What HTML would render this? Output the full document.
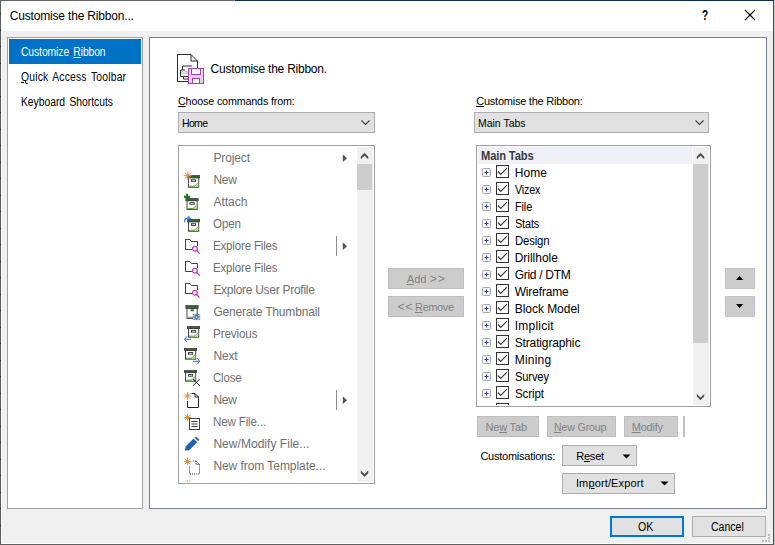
<!DOCTYPE html>
<html><head><meta charset="utf-8"><title>Customise the Ribbon...</title>
<style>
html,body{margin:0;padding:0;}
body{width:775px;height:545px;overflow:hidden;background:#f0f0f0;position:relative;font-family:"Liberation Sans", sans-serif;}
.b{position:absolute;display:block;}
.t{position:absolute;white-space:nowrap;line-height:16px;height:16px;font-family:"Liberation Sans", sans-serif;}
u{text-decoration:underline;text-underline-offset:1px;}
</style></head><body>
<div class="b" style="left:1px;top:1px;width:772px;height:30px;background:#fff;"></div>
<div class="b" style="left:0px;top:0px;width:235px;height:1px;background:#666;"></div>
<div class="b" style="left:234px;top:0px;width:1px;height:1px;background:#8a8a8a;"></div>
<div class="b" style="left:235px;top:0px;width:540px;height:1px;background:#0a2d50;"></div>
<div class="b" style="left:0px;top:1px;width:1px;height:544px;background:#5c5c5c;"></div>
<div class="b" style="left:1px;top:31px;width:1px;height:512px;background:#fff;"></div>
<div class="b" style="left:773px;top:1px;width:1px;height:544px;background:#4a4a4a;"></div>
<div class="b" style="left:774px;top:0px;width:1px;height:545px;background:#c4c4c4;"></div>
<div class="b" style="left:1px;top:543px;width:772px;height:1px;background:#fff;"></div>
<div class="b" style="left:0px;top:544px;width:774px;height:1px;background:#606060;"></div>
<div class="b" style="left:0px;top:13px;width:1px;height:1px;background:#2a2a2a;"></div>
<div class="b" style="left:0px;top:30px;width:1px;height:1px;background:#2a2a2a;"></div>
<div class="b" style="left:0px;top:46px;width:1px;height:1px;background:#2a2a2a;"></div>
<div class="b" style="left:0px;top:63px;width:1px;height:1px;background:#2a2a2a;"></div>
<div class="b" style="left:0px;top:79px;width:1px;height:1px;background:#2a2a2a;"></div>
<div class="b" style="left:0px;top:96px;width:1px;height:1px;background:#2a2a2a;"></div>
<div class="b" style="left:0px;top:112px;width:1px;height:1px;background:#2a2a2a;"></div>
<div class="b" style="left:0px;top:129px;width:1px;height:1px;background:#2a2a2a;"></div>
<div class="b" style="left:0px;top:145px;width:1px;height:1px;background:#2a2a2a;"></div>
<div class="b" style="left:0px;top:162px;width:1px;height:1px;background:#2a2a2a;"></div>
<div class="b" style="left:0px;top:178px;width:1px;height:1px;background:#2a2a2a;"></div>
<div class="b" style="left:0px;top:195px;width:1px;height:1px;background:#2a2a2a;"></div>
<div class="b" style="left:0px;top:211px;width:1px;height:1px;background:#2a2a2a;"></div>
<div class="b" style="left:0px;top:228px;width:1px;height:1px;background:#2a2a2a;"></div>
<div class="b" style="left:0px;top:244px;width:1px;height:1px;background:#2a2a2a;"></div>
<div class="b" style="left:0px;top:261px;width:1px;height:1px;background:#2a2a2a;"></div>
<div class="b" style="left:0px;top:277px;width:1px;height:1px;background:#2a2a2a;"></div>
<div class="b" style="left:0px;top:294px;width:1px;height:1px;background:#2a2a2a;"></div>
<div class="b" style="left:0px;top:310px;width:1px;height:1px;background:#2a2a2a;"></div>
<div class="b" style="left:0px;top:327px;width:1px;height:1px;background:#2a2a2a;"></div>
<div class="b" style="left:0px;top:343px;width:1px;height:1px;background:#2a2a2a;"></div>
<div class="b" style="left:0px;top:360px;width:1px;height:1px;background:#2a2a2a;"></div>
<div class="b" style="left:0px;top:376px;width:1px;height:1px;background:#2a2a2a;"></div>
<div class="b" style="left:0px;top:393px;width:1px;height:1px;background:#2a2a2a;"></div>
<div class="b" style="left:0px;top:409px;width:1px;height:1px;background:#2a2a2a;"></div>
<div class="b" style="left:0px;top:426px;width:1px;height:1px;background:#2a2a2a;"></div>
<div class="b" style="left:0px;top:442px;width:1px;height:1px;background:#2a2a2a;"></div>
<div class="b" style="left:0px;top:459px;width:1px;height:1px;background:#2a2a2a;"></div>
<div class="b" style="left:0px;top:475px;width:1px;height:1px;background:#2a2a2a;"></div>
<div class="b" style="left:0px;top:492px;width:1px;height:1px;background:#2a2a2a;"></div>
<div class="b" style="left:0px;top:508px;width:1px;height:1px;background:#2a2a2a;"></div>
<div class="b" style="left:0px;top:525px;width:1px;height:1px;background:#2a2a2a;"></div>
<div class="t " style="left:9.80px;top:8px;font-size:12px;color:#000;letter-spacing:-0.180px;">Customise the Ribbon...</div>
<div class="t " style="left:702.30px;top:7px;font-size:14px;color:#000;font-weight:bold;transform:scaleX(0.72);transform-origin:0 0;">?</div>
<svg class="b" style="left:744px;top:9px" width="14" height="14" viewBox="0 0 14 14"><path d="M1 1 L11 11 M11 1 L1 11" stroke="#000" stroke-width="1.1" fill="none"/></svg>
<div class="b" style="left:7px;top:37px;width:136px;height:472px;background:#fff;border:1px solid #a0a0a0;box-sizing:border-box;"></div>
<div class="b" style="left:9px;top:39px;width:132px;height:25px;background:#0072c6;"></div>
<div class="t " style="left:20.80px;top:44px;font-size:12px;color:#fff;letter-spacing:-0.091px;word-spacing:1.7px;transform:scaleX(0.86);transform-origin:0 0;">Customize <u>R</u>ibbon</div>
<div class="t " style="left:20.60px;top:69px;font-size:12px;color:#000;letter-spacing:0.220px;word-spacing:1.7px;transform:scaleX(0.86);transform-origin:0 0;"><u>Q</u>uick Access Toolbar</div>
<div class="t " style="left:21.30px;top:94px;font-size:12px;color:#000;letter-spacing:-0.014px;word-spacing:1.7px;transform:scaleX(0.86);transform-origin:0 0;">Keyboard Shortcuts</div>
<div class="b" style="left:149px;top:37px;width:618px;height:472px;background:#fff;border:1px solid #7a8290;box-sizing:border-box;"></div>
<svg class="b" style="left:176px;top:52px" width="30" height="34" viewBox="0 0 30 34">
<path d="M1.5 2.5 H15 L21.5 9 V17 M13 29.5 H1.5 V2.5 M15 2.5 V9 H21.5" stroke="#2b2b2b" stroke-width="1" fill="none"/>
<path d="M16 14 H6.5 V18 M4.5 18 H9 M4.5 18 V24.5 H7.5 V27 H12" stroke="#2b2b2b" stroke-width="1" fill="none"/>
<rect x="5" y="19" width="7" height="3" fill="#d9d9d9"/>
<path d="M7.5 24.5 H12" stroke="#2b2b2b" stroke-width="1"/>
<rect x="12.5" y="16.5" width="15" height="15" fill="#e6cfe8" stroke="#a63fb0" stroke-width="1"/>
<rect x="15.5" y="16.5" width="9" height="6" fill="#fff" stroke="#a63fb0" stroke-width="1"/>
<rect x="16.5" y="26.5" width="7" height="5" fill="#fff" stroke="#a63fb0" stroke-width="1"/>
</svg>
<div class="t " style="left:210.60px;top:61px;font-size:12px;color:#000;letter-spacing:-0.250px;">Customise the Ribbon.</div>
<div class="t " style="left:178.20px;top:93px;font-size:11px;color:#000;letter-spacing:-0.150px;transform:scaleX(0.974);transform-origin:0 0;"><u>C</u>hoose commands from:</div>
<div class="t " style="left:476.20px;top:93px;font-size:11px;color:#000;letter-spacing:-0.234px;"><u>C</u>ustomise the Ribbon:</div>
<div class="b" style="left:178px;top:112px;width:197px;height:21px;background:#e1e1e1;border:1px solid #adadad;box-sizing:border-box;"></div>
<div class="t " style="left:181.90px;top:115px;font-size:11px;color:#000;letter-spacing:-0.660px;transform:scaleX(0.95);transform-origin:0 0;">Home</div>
<svg class="b" style="left:360px;top:119px" width="12" height="8" viewBox="0 0 12 8"><path d="M1.5 1.5 L5.5 5.5 L9.5 1.5" stroke="#404040" stroke-width="1.1" fill="none"/></svg>
<div class="b" style="left:474px;top:112px;width:235px;height:21px;background:#e1e1e1;border:1px solid #adadad;box-sizing:border-box;"></div>
<div class="t " style="left:477.50px;top:115px;font-size:11px;color:#000;letter-spacing:0.008px;transform:scaleX(0.95);transform-origin:0 0;">Main Tabs</div>
<svg class="b" style="left:694px;top:119px" width="12" height="8" viewBox="0 0 12 8"><path d="M1.5 1.5 L5.5 5.5 L9.5 1.5" stroke="#404040" stroke-width="1.1" fill="none"/></svg>
<div class="b" style="left:178px;top:145px;width:197px;height:339px;background:#fff;border:1px solid #a0a0a0;box-sizing:border-box;"></div>
<div class="b" style="left:357px;top:147px;width:16px;height:335px;background:#f0f0f0;"></div>
<div class="b" style="left:357px;top:164px;width:15px;height:26px;background:#cdcdcd;"></div>
<svg class="b" style="left:359px;top:151px" width="11" height="10" viewBox="0 0 11 10"><path transform="translate(0.50 0.80)" d="M5 1 L8.7 4.8 V7.4 L5 3.9 L1.3 7.4 V4.8 Z" fill="#505050"/></svg>
<svg class="b" style="left:359px;top:469px" width="11" height="10" viewBox="0 0 11 10"><path transform="translate(0.50 0.90)" d="M5 7.1 L8.7 3.3 V0.7 L5 4.2 L1.3 0.7 V3.3 Z" fill="#505050"/></svg>
<div class="t " style="left:213.40px;top:150px;font-size:12px;color:#707070;letter-spacing:-0.124px;">Project</div>
<svg class="b" style="left:342px;top:154px" width="6" height="9" viewBox="0 0 6 9"><path d="M0.8 0.5 L5 4.2 L0.8 8 Z" fill="#505050"/></svg>
<div class="t " style="left:213.40px;top:172px;font-size:12px;color:#707070;letter-spacing:-0.268px;">New</div>
<svg class="b" style="left:184px;top:172px;overflow:visible" width="17" height="17" viewBox="0 0 17 17"><rect x="4.5" y="5.7" width="10.2" height="9.60" fill="#fff" stroke="#484848" stroke-width="1"/><path d="M14.2 10.20 V14.80 H9.2 Z" fill="#74b356"/><path d="M11 14.80 L14.2 11.80 M12.8 14.80 L14.2 13.50" stroke="#fff" stroke-width="0.8"/><rect x="5" y="13.70" width="5.6" height="1.1" fill="#62a83e"/><rect x="3.35" y="3.35" width="12.3" height="2.50" fill="#2f6b2f" stroke="#3a3a3a" stroke-width="0.7"/><rect x="7.5" y="7.70" width="4.1" height="1.7" fill="#fff" stroke="#444" stroke-width="1"/><path d="M-0.15 3.65 L7.85 3.65 M1.02 0.82 L6.68 6.48 M3.85 -0.35 L3.85 7.65 M6.68 0.82 L1.02 6.48 " stroke="#f28a3c" stroke-width="1" fill="none"/></svg>
<div class="t " style="left:213.40px;top:194px;font-size:12px;color:#707070;letter-spacing:-0.004px;">Attach</div>
<svg class="b" style="left:184px;top:194px;overflow:visible" width="17" height="17" viewBox="0 0 17 17"><rect x="3.0" y="6.6000000000000005" width="10.2" height="8.90" fill="#fff" stroke="#484848" stroke-width="1"/><path d="M12.7 10.40 V15.00 H7.7 Z" fill="#74b356"/><path d="M9.5 15.00 L12.7 12.00 M11.3 15.00 L12.7 13.70" stroke="#fff" stroke-width="0.8"/><rect x="3.5" y="13.90" width="5.6" height="1.1" fill="#62a83e"/><rect x="1.85" y="4.35" width="12.3" height="2.40" fill="#2f6b2f" stroke="#3a3a3a" stroke-width="0.7"/><rect x="6.0" y="8.60" width="4.1" height="1.7" fill="#fff" stroke="#444" stroke-width="1"/><path d="M3 -0.2 V5.6 M0 2.9 H6.1" stroke="#1f7a1f" stroke-width="2.1"/></svg>
<div class="t " style="left:213.40px;top:216px;font-size:12px;color:#707070;letter-spacing:-0.150px;transform:scaleX(0.969);transform-origin:0 0;">Open</div>
<svg class="b" style="left:184px;top:216px;overflow:visible" width="17" height="17" viewBox="0 0 17 17"><rect x="4.5" y="5.7" width="10.2" height="9.60" fill="#fff" stroke="#484848" stroke-width="1"/><path d="M14.2 10.20 V14.80 H9.2 Z" fill="#74b356"/><path d="M11 14.80 L14.2 11.80 M12.8 14.80 L14.2 13.50" stroke="#fff" stroke-width="0.8"/><rect x="5" y="13.70" width="5.6" height="1.1" fill="#62a83e"/><rect x="3.35" y="3.35" width="12.3" height="2.50" fill="#2f6b2f" stroke="#3a3a3a" stroke-width="0.7"/><rect x="7.5" y="7.70" width="4.1" height="1.7" fill="#fff" stroke="#444" stroke-width="1"/><path d="M1 6.5 C-0.3 3.5 1.8 1.6 5 2.2 M4 0.2 L6.3 2.6 L3.2 4.2" stroke="#2f6fd0" stroke-width="1.1" fill="none"/></svg>
<div class="t " style="left:213.40px;top:238px;font-size:12px;color:#707070;letter-spacing:-0.150px;transform:scaleX(0.956);transform-origin:0 0;">Explore Files</div>
<svg class="b" style="left:184px;top:238px;overflow:visible" width="17" height="17" viewBox="0 0 17 17"><path d="M1.5 1.5 H6 L7.5 3.5 H13.5 V8 M1.5 1.5 V11.5 H8" stroke="#2a2a2a" stroke-width="0.9" fill="none"/><circle cx="10.9" cy="10.7" r="2.4" stroke="#b040b8" stroke-width="1.2" fill="#fff"/><path d="M12.7 12.5 L15.6 15.6" stroke="#b040b8" stroke-width="1.2"/></svg>
<svg class="b" style="left:342px;top:242px" width="6" height="9" viewBox="0 0 6 9"><path d="M0.8 0.5 L5 4.2 L0.8 8 Z" fill="#505050"/></svg>
<div class="b" style="left:336px;top:236px;width:1px;height:20px;background:#8c8c8c;"></div>
<div class="t " style="left:213.40px;top:260px;font-size:12px;color:#707070;letter-spacing:-0.150px;transform:scaleX(0.956);transform-origin:0 0;">Explore Files</div>
<svg class="b" style="left:184px;top:260px;overflow:visible" width="17" height="17" viewBox="0 0 17 17"><path d="M1.5 1.5 H6 L7.5 3.5 H13.5 V8 M1.5 1.5 V11.5 H8" stroke="#2a2a2a" stroke-width="0.9" fill="none"/><circle cx="10.9" cy="10.7" r="2.4" stroke="#b040b8" stroke-width="1.2" fill="#fff"/><path d="M12.7 12.5 L15.6 15.6" stroke="#b040b8" stroke-width="1.2"/></svg>
<div class="t " style="left:213.40px;top:282px;font-size:12px;color:#707070;letter-spacing:-0.274px;">Explore User Profile</div>
<svg class="b" style="left:184px;top:282px;overflow:visible" width="17" height="17" viewBox="0 0 17 17"><path d="M1.5 1.5 H6 L7.5 3.5 H13.5 V8 M1.5 1.5 V11.5 H8" stroke="#2a2a2a" stroke-width="0.9" fill="none"/><circle cx="10.9" cy="10.7" r="2.4" stroke="#b040b8" stroke-width="1.2" fill="#fff"/><path d="M12.7 12.5 L15.6 15.6" stroke="#b040b8" stroke-width="1.2"/></svg>
<div class="t " style="left:213.40px;top:304px;font-size:12px;color:#707070;letter-spacing:-0.157px;">Generate Thumbnail</div>
<svg class="b" style="left:184px;top:304px;overflow:visible" width="17" height="17" viewBox="0 0 17 17"><rect x="3.0" y="4.3" width="10.2" height="10.10" fill="#fff" stroke="#484848" stroke-width="1"/><path d="M12.7 9.30 V13.90 H7.7 Z" fill="#74b356"/><path d="M9.5 13.90 L12.7 10.90 M11.3 13.90 L12.7 12.60" stroke="#fff" stroke-width="0.8"/><rect x="3.5" y="12.80" width="5.6" height="1.1" fill="#62a83e"/><rect x="1.85" y="1.5499999999999998" width="12.3" height="2.90" fill="#2f6b2f" stroke="#3a3a3a" stroke-width="0.7"/><rect x="6.6" y="5.4" width="3.2" height="1.8" fill="#444"/><rect x="9.2" y="10.6" width="6.5" height="5" fill="#fff" stroke="#3a3a3a" stroke-width="0.8" stroke-dasharray="1 0.6"/><circle cx="12.5" cy="13.1" r="2.4" fill="#2f6fd0"/><path d="M11.9 12 L13.6 13.1 L11.9 14.2 Z" fill="#fff"/></svg>
<div class="t " style="left:213.40px;top:326px;font-size:12px;color:#707070;letter-spacing:-0.150px;transform:scaleX(0.975);transform-origin:0 0;">Previous</div>
<svg class="b" style="left:184px;top:326px;overflow:visible" width="17" height="17" viewBox="0 0 17 17"><rect x="4.5" y="2.5" width="10.2" height="8.70" fill="#fff" stroke="#484848" stroke-width="1"/><path d="M14.2 6.10 V10.70 H9.2 Z" fill="#74b356"/><path d="M11 10.70 L14.2 7.70 M12.8 10.70 L14.2 9.40" stroke="#fff" stroke-width="0.8"/><rect x="5" y="9.60" width="5.6" height="1.1" fill="#62a83e"/><rect x="3.35" y="0.35" width="12.3" height="2.30" fill="#2f6b2f" stroke="#3a3a3a" stroke-width="0.7"/><rect x="7.5" y="4.50" width="4.1" height="1.7" fill="#fff" stroke="#444" stroke-width="1"/><path d="M7 13.3 H0.6 M3 10.3 L0.5 13.3 L3 16.3" stroke="#2f6fd0" stroke-width="1" fill="none"/></svg>
<div class="t " style="left:213.40px;top:348px;font-size:12px;color:#707070;letter-spacing:-0.124px;">Next</div>
<svg class="b" style="left:184px;top:348px;overflow:visible" width="17" height="17" viewBox="0 0 17 17"><rect x="1.5" y="2.5" width="10.2" height="8.70" fill="#fff" stroke="#484848" stroke-width="1"/><path d="M11.2 6.10 V10.70 H6.2 Z" fill="#74b356"/><path d="M8 10.70 L11.2 7.70 M9.8 10.70 L11.2 9.40" stroke="#fff" stroke-width="0.8"/><rect x="2" y="9.60" width="5.6" height="1.1" fill="#62a83e"/><rect x="0.35" y="0.35" width="12.3" height="2.30" fill="#2f6b2f" stroke="#3a3a3a" stroke-width="0.7"/><rect x="4.5" y="4.50" width="4.1" height="1.7" fill="#fff" stroke="#444" stroke-width="1"/><path d="M9 13.3 H15.6 M13.2 10.3 L15.7 13.3 L13.2 16.3" stroke="#2f6fd0" stroke-width="1" fill="none"/></svg>
<div class="t " style="left:213.40px;top:370px;font-size:12px;color:#707070;letter-spacing:-0.150px;transform:scaleX(0.947);transform-origin:0 0;">Close</div>
<svg class="b" style="left:184px;top:370px;overflow:visible" width="17" height="17" viewBox="0 0 17 17"><rect x="1.5" y="2.5" width="10.2" height="8.70" fill="#fff" stroke="#484848" stroke-width="1"/><path d="M11.2 6.10 V10.70 H6.2 Z" fill="#74b356"/><path d="M8 10.70 L11.2 7.70 M9.8 10.70 L11.2 9.40" stroke="#fff" stroke-width="0.8"/><rect x="2" y="9.60" width="5.6" height="1.1" fill="#62a83e"/><rect x="0.35" y="0.35" width="12.3" height="2.30" fill="#2f6b2f" stroke="#3a3a3a" stroke-width="0.7"/><rect x="4.5" y="4.50" width="4.1" height="1.7" fill="#fff" stroke="#444" stroke-width="1"/><path d="M9 9 L15.8 15.8 M15.8 9 L9 15.8" stroke="#222" stroke-width="1" fill="none"/></svg>
<div class="t " style="left:213.40px;top:392px;font-size:12px;color:#707070;letter-spacing:-0.268px;">New</div>
<svg class="b" style="left:184px;top:392px;overflow:visible" width="17" height="17" viewBox="0 0 17 17"><path d="M-0.30 4.00 L7.30 4.00 M0.81 1.31 L6.19 6.69 M3.50 0.20 L3.50 7.80 M6.19 1.31 L0.81 6.69 " stroke="#f28a3c" stroke-width="1" fill="none"/><path d="M3.5 9 V15.5 H14.5 V5 L11 1.5 H7.5 M11 1.5 V5 H14.5" stroke="#222" stroke-width="1" fill="none"/></svg>
<svg class="b" style="left:342px;top:396px" width="6" height="9" viewBox="0 0 6 9"><path d="M0.8 0.5 L5 4.2 L0.8 8 Z" fill="#505050"/></svg>
<div class="b" style="left:336px;top:390px;width:1px;height:20px;background:#8c8c8c;"></div>
<div class="t " style="left:213.40px;top:414px;font-size:12px;color:#707070;letter-spacing:-0.150px;transform:scaleX(0.964);transform-origin:0 0;">New File...</div>
<svg class="b" style="left:184px;top:414px;overflow:visible" width="17" height="17" viewBox="0 0 17 17"><path d="M-0.30 3.50 L7.30 3.50 M0.81 0.81 L6.19 6.19 M3.50 -0.30 L3.50 7.30 M6.19 0.81 L0.81 6.19 " stroke="#f28a3c" stroke-width="1" fill="none"/><rect x="5.5" y="4.5" width="10" height="11" fill="#fff" stroke="#444" stroke-width="1"/><path d="M7.5 7.5 H13.5 M7.5 10 H13.5 M7.5 12.5 H13.5" stroke="#333" stroke-width="1"/></svg>
<div class="t " style="left:213.40px;top:436px;font-size:12px;color:#707070;letter-spacing:0.038px;">New/Modify File...</div>
<svg class="b" style="left:184px;top:436px;overflow:visible" width="17" height="17" viewBox="0 0 17 17"><path d="M1 14.5 L1.6 10.6 L9.6 2.6 L13.2 6.2 L5.2 14.2 Z" fill="#1e63b8"/><path d="M10.6 1.6 L12 0.4 L15.4 3.8 L14.2 5.2 Z" fill="#1e63b8"/></svg>
<div class="t " style="left:213.40px;top:458px;font-size:12px;color:#707070;letter-spacing:-0.055px;">New from Template...</div>
<svg class="b" style="left:184px;top:458px;overflow:visible" width="17" height="17" viewBox="0 0 17 17"><path d="M-0.30 3.50 L7.30 3.50 M0.81 0.81 L6.19 6.19 M3.50 -0.30 L3.50 7.30 M6.19 0.81 L0.81 6.19 " stroke="#f28a3c" stroke-width="1" fill="none"/><path d="M5.5 8.5 V16 H15.5 V6.5 L12 3 H9 M12 3 V6.5 H15.5" stroke="#333" stroke-width="1" stroke-dasharray="1 1" fill="none"/></svg>
<svg class="b" style="left:184px;top:480px" width="8" height="2" viewBox="0 0 8 2"><path d="M1.5 1 h1 M3.5 0.5 v1 M5.5 1 h1" stroke="#f28a3c" stroke-width="1"/></svg>
<div class="b" style="left:388px;top:268px;width:76px;height:21px;background:#cccccc;border:1px solid #bfbfbf;box-sizing:border-box;"></div>
<div class="t " style="left:406.80px;top:271px;font-size:11px;color:#838383;"><u>A</u>dd <span style="font-size:12px;letter-spacing:1px;margin-left:0.2px">&gt;&gt;</span></div>
<div class="b" style="left:388px;top:296px;width:76px;height:21px;background:#cccccc;border:1px solid #bfbfbf;box-sizing:border-box;"></div>
<div class="t " style="left:397.60px;top:299px;font-size:11px;color:#838383;"><span style="font-size:12px;letter-spacing:1px;margin-right:-1.2px">&lt;&lt;</span><span style="letter-spacing:-0.4px"> <u>R</u>emove</span></div>
<div class="b" style="left:476px;top:145px;width:235px;height:262px;background:#fff;border:1px solid #a0a0a0;box-sizing:border-box;"></div>
<div class="b" style="left:478px;top:147px;width:214px;height:17px;background:#f0f1f6;"></div>
<div class="t " style="left:481.30px;top:148px;font-size:12px;color:#3b3b3b;letter-spacing:-0.150px;font-weight:bold;transform:scaleX(0.93);transform-origin:0 0;">Main Tabs</div>
<div class="b" style="left:693px;top:147px;width:16px;height:258px;background:#f0f0f0;"></div>
<div class="b" style="left:693px;top:164px;width:15px;height:179px;background:#cdcdcd;"></div>
<svg class="b" style="left:695px;top:151px" width="11" height="10" viewBox="0 0 11 10"><path transform="translate(0.50 0.80)" d="M5 1 L8.7 4.8 V7.4 L5 3.9 L1.3 7.4 V4.8 Z" fill="#505050"/></svg>
<svg class="b" style="left:695px;top:393px" width="11" height="10" viewBox="0 0 11 10"><path transform="translate(0.50 0.20)" d="M5 7.1 L8.7 3.3 V0.7 L5 4.2 L1.3 0.7 V3.3 Z" fill="#505050"/></svg>
<svg class="b" style="left:482px;top:168px" width="9" height="9" viewBox="0 0 9 9"><rect x="0.5" y="0.5" width="8" height="8" rx="1" fill="#f7f7f7" stroke="#a8a8a8"/><path d="M2.5 4.5 H6.5 M4.5 2.5 V6.5" stroke="#2b3fa0" stroke-width="1"/></svg>
<svg class="b" style="left:496px;top:165px" width="13" height="13" viewBox="0 0 13 13"><rect x="0.5" y="0.5" width="12" height="12" fill="#fff" stroke="#333"/><path d="M1.9 6.5 L4.7 9.4 L10.9 3.2" stroke="#3a3a3a" stroke-width="1.2" fill="none"/></svg>
<div class="t " style="left:514.70px;top:165px;font-size:12px;color:#000;letter-spacing:0.095px;">Home</div>
<svg class="b" style="left:482px;top:185px" width="9" height="9" viewBox="0 0 9 9"><rect x="0.5" y="0.5" width="8" height="8" rx="1" fill="#f7f7f7" stroke="#a8a8a8"/><path d="M2.5 4.5 H6.5 M4.5 2.5 V6.5" stroke="#2b3fa0" stroke-width="1"/></svg>
<svg class="b" style="left:496px;top:182px" width="13" height="13" viewBox="0 0 13 13"><rect x="0.5" y="0.5" width="12" height="12" fill="#fff" stroke="#333"/><path d="M1.9 6.5 L4.7 9.4 L10.9 3.2" stroke="#3a3a3a" stroke-width="1.2" fill="none"/></svg>
<div class="t " style="left:514.70px;top:182px;font-size:12px;color:#000;letter-spacing:-0.150px;transform:scaleX(0.89);transform-origin:0 0;">Vizex</div>
<svg class="b" style="left:482px;top:202px" width="9" height="9" viewBox="0 0 9 9"><rect x="0.5" y="0.5" width="8" height="8" rx="1" fill="#f7f7f7" stroke="#a8a8a8"/><path d="M2.5 4.5 H6.5 M4.5 2.5 V6.5" stroke="#2b3fa0" stroke-width="1"/></svg>
<svg class="b" style="left:496px;top:199px" width="13" height="13" viewBox="0 0 13 13"><rect x="0.5" y="0.5" width="12" height="12" fill="#fff" stroke="#333"/><path d="M1.9 6.5 L4.7 9.4 L10.9 3.2" stroke="#3a3a3a" stroke-width="1.2" fill="none"/></svg>
<div class="t " style="left:514.70px;top:199px;font-size:12px;color:#000;letter-spacing:-0.150px;transform:scaleX(0.911);transform-origin:0 0;">File</div>
<svg class="b" style="left:482px;top:219px" width="9" height="9" viewBox="0 0 9 9"><rect x="0.5" y="0.5" width="8" height="8" rx="1" fill="#f7f7f7" stroke="#a8a8a8"/><path d="M2.5 4.5 H6.5 M4.5 2.5 V6.5" stroke="#2b3fa0" stroke-width="1"/></svg>
<svg class="b" style="left:496px;top:216px" width="13" height="13" viewBox="0 0 13 13"><rect x="0.5" y="0.5" width="12" height="12" fill="#fff" stroke="#333"/><path d="M1.9 6.5 L4.7 9.4 L10.9 3.2" stroke="#3a3a3a" stroke-width="1.2" fill="none"/></svg>
<div class="t " style="left:514.70px;top:216px;font-size:12px;color:#000;letter-spacing:-0.150px;transform:scaleX(0.905);transform-origin:0 0;">Stats</div>
<svg class="b" style="left:482px;top:236px" width="9" height="9" viewBox="0 0 9 9"><rect x="0.5" y="0.5" width="8" height="8" rx="1" fill="#f7f7f7" stroke="#a8a8a8"/><path d="M2.5 4.5 H6.5 M4.5 2.5 V6.5" stroke="#2b3fa0" stroke-width="1"/></svg>
<svg class="b" style="left:496px;top:233px" width="13" height="13" viewBox="0 0 13 13"><rect x="0.5" y="0.5" width="12" height="12" fill="#fff" stroke="#333"/><path d="M1.9 6.5 L4.7 9.4 L10.9 3.2" stroke="#3a3a3a" stroke-width="1.2" fill="none"/></svg>
<div class="t " style="left:514.70px;top:233px;font-size:12px;color:#000;letter-spacing:-0.150px;transform:scaleX(0.945);transform-origin:0 0;">Design</div>
<svg class="b" style="left:482px;top:253px" width="9" height="9" viewBox="0 0 9 9"><rect x="0.5" y="0.5" width="8" height="8" rx="1" fill="#f7f7f7" stroke="#a8a8a8"/><path d="M2.5 4.5 H6.5 M4.5 2.5 V6.5" stroke="#2b3fa0" stroke-width="1"/></svg>
<svg class="b" style="left:496px;top:250px" width="13" height="13" viewBox="0 0 13 13"><rect x="0.5" y="0.5" width="12" height="12" fill="#fff" stroke="#333"/><path d="M1.9 6.5 L4.7 9.4 L10.9 3.2" stroke="#3a3a3a" stroke-width="1.2" fill="none"/></svg>
<div class="t " style="left:514.70px;top:250px;font-size:12px;color:#000;letter-spacing:-0.018px;">Drillhole</div>
<svg class="b" style="left:482px;top:270px" width="9" height="9" viewBox="0 0 9 9"><rect x="0.5" y="0.5" width="8" height="8" rx="1" fill="#f7f7f7" stroke="#a8a8a8"/><path d="M2.5 4.5 H6.5 M4.5 2.5 V6.5" stroke="#2b3fa0" stroke-width="1"/></svg>
<svg class="b" style="left:496px;top:267px" width="13" height="13" viewBox="0 0 13 13"><rect x="0.5" y="0.5" width="12" height="12" fill="#fff" stroke="#333"/><path d="M1.9 6.5 L4.7 9.4 L10.9 3.2" stroke="#3a3a3a" stroke-width="1.2" fill="none"/></svg>
<div class="t " style="left:514.70px;top:267px;font-size:12px;color:#000;letter-spacing:-0.285px;">Grid / DTM</div>
<svg class="b" style="left:482px;top:287px" width="9" height="9" viewBox="0 0 9 9"><rect x="0.5" y="0.5" width="8" height="8" rx="1" fill="#f7f7f7" stroke="#a8a8a8"/><path d="M2.5 4.5 H6.5 M4.5 2.5 V6.5" stroke="#2b3fa0" stroke-width="1"/></svg>
<svg class="b" style="left:496px;top:284px" width="13" height="13" viewBox="0 0 13 13"><rect x="0.5" y="0.5" width="12" height="12" fill="#fff" stroke="#333"/><path d="M1.9 6.5 L4.7 9.4 L10.9 3.2" stroke="#3a3a3a" stroke-width="1.2" fill="none"/></svg>
<div class="t " style="left:514.70px;top:284px;font-size:12px;color:#000;letter-spacing:-0.154px;">Wireframe</div>
<svg class="b" style="left:482px;top:304px" width="9" height="9" viewBox="0 0 9 9"><rect x="0.5" y="0.5" width="8" height="8" rx="1" fill="#f7f7f7" stroke="#a8a8a8"/><path d="M2.5 4.5 H6.5 M4.5 2.5 V6.5" stroke="#2b3fa0" stroke-width="1"/></svg>
<svg class="b" style="left:496px;top:301px" width="13" height="13" viewBox="0 0 13 13"><rect x="0.5" y="0.5" width="12" height="12" fill="#fff" stroke="#333"/><path d="M1.9 6.5 L4.7 9.4 L10.9 3.2" stroke="#3a3a3a" stroke-width="1.2" fill="none"/></svg>
<div class="t " style="left:514.70px;top:301px;font-size:12px;color:#000;letter-spacing:-0.036px;">Block Model</div>
<svg class="b" style="left:482px;top:321px" width="9" height="9" viewBox="0 0 9 9"><rect x="0.5" y="0.5" width="8" height="8" rx="1" fill="#f7f7f7" stroke="#a8a8a8"/><path d="M2.5 4.5 H6.5 M4.5 2.5 V6.5" stroke="#2b3fa0" stroke-width="1"/></svg>
<svg class="b" style="left:496px;top:318px" width="13" height="13" viewBox="0 0 13 13"><rect x="0.5" y="0.5" width="12" height="12" fill="#fff" stroke="#333"/><path d="M1.9 6.5 L4.7 9.4 L10.9 3.2" stroke="#3a3a3a" stroke-width="1.2" fill="none"/></svg>
<div class="t " style="left:514.70px;top:318px;font-size:12px;color:#000;letter-spacing:0.238px;">Implicit</div>
<svg class="b" style="left:482px;top:338px" width="9" height="9" viewBox="0 0 9 9"><rect x="0.5" y="0.5" width="8" height="8" rx="1" fill="#f7f7f7" stroke="#a8a8a8"/><path d="M2.5 4.5 H6.5 M4.5 2.5 V6.5" stroke="#2b3fa0" stroke-width="1"/></svg>
<svg class="b" style="left:496px;top:335px" width="13" height="13" viewBox="0 0 13 13"><rect x="0.5" y="0.5" width="12" height="12" fill="#fff" stroke="#333"/><path d="M1.9 6.5 L4.7 9.4 L10.9 3.2" stroke="#3a3a3a" stroke-width="1.2" fill="none"/></svg>
<div class="t " style="left:514.70px;top:335px;font-size:12px;color:#000;letter-spacing:-0.139px;">Stratigraphic</div>
<svg class="b" style="left:482px;top:355px" width="9" height="9" viewBox="0 0 9 9"><rect x="0.5" y="0.5" width="8" height="8" rx="1" fill="#f7f7f7" stroke="#a8a8a8"/><path d="M2.5 4.5 H6.5 M4.5 2.5 V6.5" stroke="#2b3fa0" stroke-width="1"/></svg>
<svg class="b" style="left:496px;top:352px" width="13" height="13" viewBox="0 0 13 13"><rect x="0.5" y="0.5" width="12" height="12" fill="#fff" stroke="#333"/><path d="M1.9 6.5 L4.7 9.4 L10.9 3.2" stroke="#3a3a3a" stroke-width="1.2" fill="none"/></svg>
<div class="t " style="left:514.70px;top:352px;font-size:12px;color:#000;letter-spacing:0.230px;">Mining</div>
<svg class="b" style="left:482px;top:372px" width="9" height="9" viewBox="0 0 9 9"><rect x="0.5" y="0.5" width="8" height="8" rx="1" fill="#f7f7f7" stroke="#a8a8a8"/><path d="M2.5 4.5 H6.5 M4.5 2.5 V6.5" stroke="#2b3fa0" stroke-width="1"/></svg>
<svg class="b" style="left:496px;top:369px" width="13" height="13" viewBox="0 0 13 13"><rect x="0.5" y="0.5" width="12" height="12" fill="#fff" stroke="#333"/><path d="M1.9 6.5 L4.7 9.4 L10.9 3.2" stroke="#3a3a3a" stroke-width="1.2" fill="none"/></svg>
<div class="t " style="left:514.70px;top:369px;font-size:12px;color:#000;letter-spacing:-0.150px;transform:scaleX(0.929);transform-origin:0 0;">Survey</div>
<svg class="b" style="left:482px;top:389px" width="9" height="9" viewBox="0 0 9 9"><rect x="0.5" y="0.5" width="8" height="8" rx="1" fill="#f7f7f7" stroke="#a8a8a8"/><path d="M2.5 4.5 H6.5 M4.5 2.5 V6.5" stroke="#2b3fa0" stroke-width="1"/></svg>
<svg class="b" style="left:496px;top:386px" width="13" height="13" viewBox="0 0 13 13"><rect x="0.5" y="0.5" width="12" height="12" fill="#fff" stroke="#333"/><path d="M1.9 6.5 L4.7 9.4 L10.9 3.2" stroke="#3a3a3a" stroke-width="1.2" fill="none"/></svg>
<div class="t " style="left:514.70px;top:386px;font-size:12px;color:#000;letter-spacing:-0.150px;transform:scaleX(0.966);transform-origin:0 0;">Script</div>
<div class="b" style="left:478px;top:402px;width:215px;height:3px;overflow:hidden"><div class="b" style="left:4px;top:4px;width:9px;height:9px;border:1px solid #b4b4b4;box-sizing:border-box"></div><div class="b" style="left:18px;top:1px;width:13px;height:13px;border:1px solid #333;box-sizing:border-box"></div></div>
<div class="b" style="left:477px;top:416px;width:62px;height:21px;background:#cccccc;border:1px solid #bfbfbf;box-sizing:border-box;"></div>
<div class="t " style="left:485.40px;top:419px;font-size:11px;color:#838383;letter-spacing:-0.167px;">Ne<u>w</u> Tab</div>
<div class="b" style="left:547px;top:416px;width:69px;height:21px;background:#cccccc;border:1px solid #bfbfbf;box-sizing:border-box;"></div>
<div class="t " style="left:554.00px;top:419px;font-size:11px;color:#838383;letter-spacing:-0.150px;transform:scaleX(0.964);transform-origin:0 0;"><u>N</u>ew Group</div>
<div class="b" style="left:624px;top:416px;width:54px;height:21px;background:#cccccc;border:1px solid #bfbfbf;box-sizing:border-box;"></div>
<div class="t " style="left:631.70px;top:419px;font-size:11px;color:#838383;letter-spacing:-0.219px;"><u>M</u>odify</div>
<div class="b" style="left:683px;top:416px;width:2px;height:21px;background:#bfbfbf;"></div>
<div class="t " style="left:480.40px;top:448px;font-size:11px;color:#000;letter-spacing:-0.247px;">Customisations:</div>
<div class="b" style="left:562px;top:445px;width:75px;height:21px;background:#e1e1e1;border:1px solid #adadad;box-sizing:border-box;"></div>
<div class="t " style="left:576.20px;top:448px;font-size:11px;color:#000;letter-spacing:-0.208px;">R<u>e</u>set</div>
<svg class="b" style="left:622px;top:454px" width="9" height="5" viewBox="0 0 9 5"><path d="M0.5 0.5 H8.5 L4.5 4.5 Z" fill="#000"/></svg>
<div class="b" style="left:562px;top:473px;width:113px;height:21px;background:#e1e1e1;border:1px solid #adadad;box-sizing:border-box;"></div>
<div class="t " style="left:575.90px;top:475px;font-size:11px;color:#000;letter-spacing:0.140px;">Im<u>p</u>ort/Export</div>
<svg class="b" style="left:660px;top:481px" width="9" height="5" viewBox="0 0 9 5"><path d="M0.5 0.5 H8.5 L4.5 4.5 Z" fill="#000"/></svg>
<div class="b" style="left:725px;top:268px;width:30px;height:21px;background:#cccccc;border:1px solid #c4c4c4;box-sizing:border-box;"></div>
<div class="b" style="left:725px;top:296px;width:30px;height:21px;background:#cccccc;border:1px solid #c4c4c4;box-sizing:border-box;"></div>
<svg class="b" style="left:736px;top:276px" width="8" height="5" viewBox="0 0 8 5"><path d="M0 4.1 L3.55 0 L7.1 4.1 Z" fill="#000"/></svg>
<svg class="b" style="left:736px;top:304px" width="8" height="5" viewBox="0 0 8 5"><path d="M0 0 L3.55 4.1 L7.1 0 Z" fill="#000"/></svg>
<div class="b" style="left:610px;top:516px;width:74px;height:21px;background:#e1e1e1;border:2px solid #0078d7;box-sizing:border-box;"></div>
<div class="t " style="left:638.40px;top:519px;font-size:12px;color:#000;letter-spacing:0.046px;transform:scaleX(0.88);transform-origin:0 0;">OK</div>
<div class="b" style="left:692px;top:516px;width:74px;height:21px;background:#e1e1e1;border:1px solid #adadad;box-sizing:border-box;"></div>
<div class="t " style="left:711.00px;top:519px;font-size:12px;color:#000;letter-spacing:-0.017px;transform:scaleX(0.88);transform-origin:0 0;">Cancel</div>
<div class="b" style="left:768px;top:534px;width:2px;height:2px;background:#bfbfbf;"></div>
<div class="b" style="left:768px;top:537px;width:2px;height:2px;background:#bfbfbf;"></div>
<div class="b" style="left:762px;top:540px;width:2px;height:2px;background:#bfbfbf;"></div>
<div class="b" style="left:765px;top:540px;width:2px;height:2px;background:#bfbfbf;"></div>
<div class="b" style="left:768px;top:540px;width:2px;height:2px;background:#bfbfbf;"></div>
</body></html>
